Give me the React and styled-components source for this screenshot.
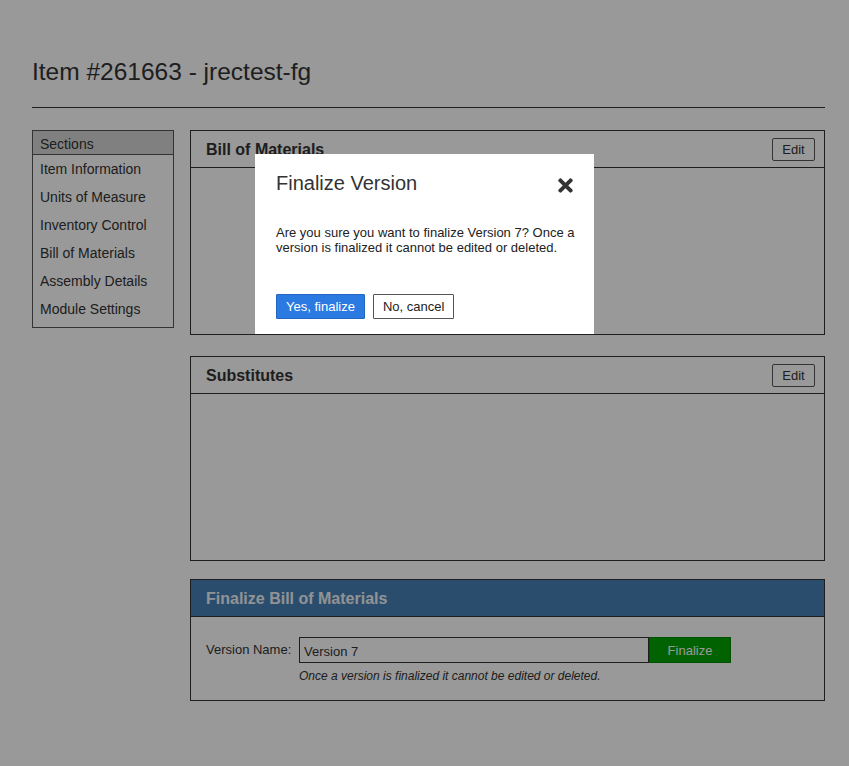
import React from 'react';
import styled, { createGlobalStyle } from 'styled-components';
import { FaTimes } from 'react-icons/fa';

const GlobalStyle = createGlobalStyle`
  html, body {
    margin: 0;
    padding: 0;
    background: #fff;
    font-family: "Liberation Sans", Arial, Helvetica, sans-serif;
    color: #333;
  }
`;

const Page = styled.div`
  width: 849px;
  min-height: 766px;
  padding: 57px 24px 0 32px;
  box-sizing: border-box;
`;

const Title = styled.h1`
  margin: 0;
  font-size: 24.5px;
  font-weight: normal;
  line-height: 30px;
  color: #333;
  padding-bottom: 20px;
  border-bottom: 1px solid #333;
`;

const Layout = styled.div`
  display: flex;
  gap: 16px;
  margin-top: 22px;
`;

const Sidebar = styled.ul`
  list-style: none;
  margin: 0;
  padding: 0 0 4px;
  width: 142px;
  box-sizing: border-box;
  border: 1px solid #555;
  align-self: flex-start;
`;

const SideHead = styled.li`
  background: #d6d6d6;
  border-bottom: 1px solid #555;
  padding: 0 7px;
  height: 23px;
  line-height: 26px;
  font-size: 14px;
`;

const SideItem = styled.li`
  padding: 0 7px;
  height: 28px;
  line-height: 28px;
  font-size: 14px;
`;

const Main = styled.div`
  flex: 1;
  display: flex;
  flex-direction: column;
`;

const Panel = styled.section`
  border: 1px solid #333;
  height: ${p => p.$h}px;
  margin-top: ${p => p.$mt || 0}px;
  box-sizing: border-box;
  display: flex;
  flex-direction: column;
`;

const PanelHead = styled.div`
  height: 37px;
  box-sizing: border-box;
  border-bottom: 1px solid #333;
  display: flex;
  align-items: center;
  justify-content: space-between;
  padding: 1px 9px 0 15px;
  background: ${p => (p.$blue ? '#4781b7' : 'transparent')};
`;

const PanelTitle = styled.h2`
  margin: 0;
  font-size: 16px;
  font-weight: bold;
  color: ${p => (p.$light ? '#f2f4f7' : '#333')};
`;

const EditButton = styled.button`
  font-family: inherit;
  font-size: 13px;
  color: #333;
  background: #fff;
  border: 1px solid #555;
  border-radius: 2px;
  height: 23px;
  width: 43px;
  padding: 0;
`;

const FinalizeBody = styled.div`
  padding: 20px 15px 0;
`;

const FormRow = styled.div`
  display: flex;
  align-items: center;
`;

const Label = styled.label`
  font-size: 13px;
  width: 93px;
  margin-top: -2px;
`;

const VersionInput = styled.input`
  font-family: inherit;
  font-size: 13px;
  color: #333;
  width: 350px;
  height: 26px;
  box-sizing: border-box;
  border: 1px solid #333;
  padding: 2px 4px 0;
  margin: 0;
  background: #fff;
`;

const GreenButton = styled.button`
  font-family: inherit;
  font-size: 13px;
  color: #fff;
  background: #00a400;
  border: 1px solid #008800;
  height: 26px;
  width: 82px;
  margin: 0;
`;

const Note = styled.p`
  margin: 6px 0 0 93px;
  font-size: 12px;
  font-style: italic;
`;

const Overlay = styled.div`
  position: fixed;
  inset: 0;
  background: rgba(0, 0, 0, 0.4);
`;

const Modal = styled.div`
  position: absolute;
  left: 255px;
  top: 154px;
  width: 339px;
  height: 180px;
  box-sizing: border-box;
  background: #fff;
  padding: 16px 18px 0 21px;
`;

const ModalHead = styled.div`
  display: flex;
  justify-content: space-between;
  align-items: center;
`;

const ModalTitle = styled.h3`
  margin: 0;
  font-size: 20px;
  font-weight: normal;
  color: #333;
  line-height: 26px;
`;

const CloseIcon = styled(FaTimes)`
  width: 21px;
  height: 21px;
  color: #333;
  margin-top: 4px;
`;

const ModalText = styled.p`
  margin: 29px 0 0;
  font-size: 13px;
  line-height: 15px;
  color: #222;
`;

const ModalButtons = styled.div`
  display: flex;
  gap: 8px;
  margin-top: 39px;
`;

const ModalButton = styled.button`
  font-family: inherit;
  font-size: 13px;
  height: 25px;
  padding: 0 9px;
  box-sizing: border-box;
  border-radius: 1px;
  color: ${p => (p.$primary ? '#fff' : '#222')};
  background: ${p => (p.$primary ? '#2a7ae2' : '#fff')};
  border: 1px solid ${p => (p.$primary ? '#2366c0' : '#555')};
`;

const sections = [
  'Item Information',
  'Units of Measure',
  'Inventory Control',
  'Bill of Materials',
  'Assembly Details',
  'Module Settings',
];

export default function App() {
  return (
    <>
      <GlobalStyle />
      <Page>
        <Title>Item #261663 - jrectest-fg</Title>
        <Layout>
          <Sidebar>
            <SideHead>Sections</SideHead>
            {sections.map(s => (
              <SideItem key={s}>{s}</SideItem>
            ))}
          </Sidebar>
          <Main>
            <Panel $h={205}>
              <PanelHead>
                <PanelTitle>Bill of Materials</PanelTitle>
                <EditButton>Edit</EditButton>
              </PanelHead>
            </Panel>
            <Panel $h={205} $mt={21}>
              <PanelHead>
                <PanelTitle>Substitutes</PanelTitle>
                <EditButton>Edit</EditButton>
              </PanelHead>
            </Panel>
            <Panel $h={122} $mt={18}>
              <PanelHead $blue>
                <PanelTitle $light>Finalize Bill of Materials</PanelTitle>
              </PanelHead>
              <FinalizeBody>
                <FormRow>
                  <Label>Version Name:</Label>
                  <VersionInput defaultValue="Version 7" />
                  <GreenButton>Finalize</GreenButton>
                </FormRow>
                <Note>Once a version is finalized it cannot be edited or deleted.</Note>
              </FinalizeBody>
            </Panel>
          </Main>
        </Layout>
      </Page>
      <Overlay />
      <Modal>
        <ModalHead>
          <ModalTitle>Finalize Version</ModalTitle>
          <CloseIcon />
        </ModalHead>
        <ModalText>
          Are you sure you want to finalize Version 7? Once a version is finalized it cannot be edited or deleted.
        </ModalText>
        <ModalButtons>
          <ModalButton $primary>Yes, finalize</ModalButton>
          <ModalButton>No, cancel</ModalButton>
        </ModalButtons>
      </Modal>
    </>
  );
}
